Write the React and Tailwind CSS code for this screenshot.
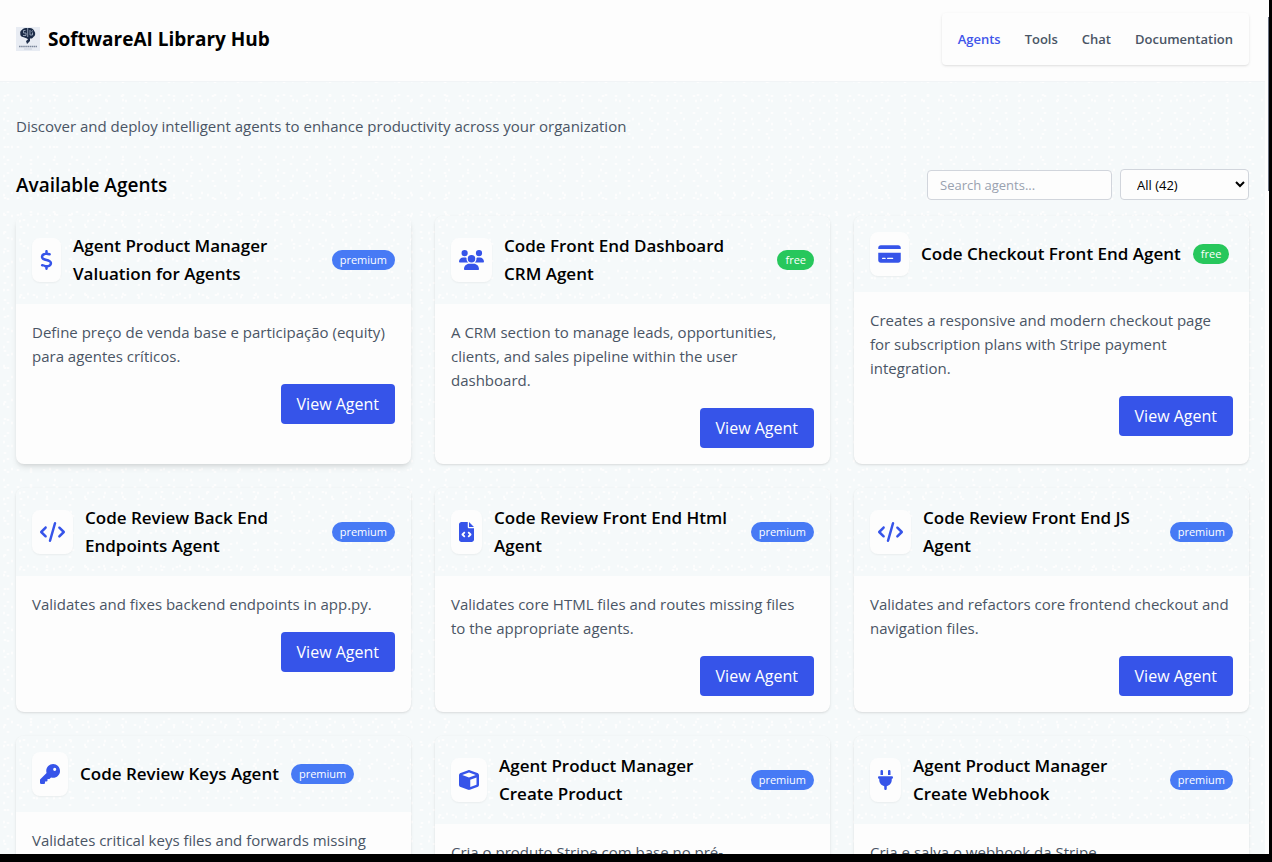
import { FaCode, FaCreditCard, FaCube, FaDollarSign, FaFileCode, FaKey, FaPlug, FaUsers } from "react-icons/fa6";

const agents = [
  { title: "Agent Product Manager Valuation for Agents", tier: "premium", icon: FaDollarSign, iconWidth: "w-[13px]", raised: true, text: "Define preço de venda base e participação (equity) para agentes críticos." },
  { title: "Code Front End Dashboard CRM\u00a0Agent", tier: "free", icon: FaUsers, iconWidth: "w-[25px]", text: "A CRM section to manage leads, opportunities, clients, and sales pipeline within the user dashboard." },
  { title: "Code Checkout Front End Agent", tier: "free", icon: FaCreditCard, iconWidth: "w-[23px]", text: "Creates a responsive and modern checkout page for subscription plans with Stripe payment integration." },
  { title: "Code Review Back End Endpoints Agent", tier: "premium", icon: FaCode, iconWidth: "w-[25px]", text: "Validates and fixes backend endpoints in app.py." },
  { title: "Code Review Front End Html Agent", tier: "premium", icon: FaFileCode, iconWidth: "w-[15px]", text: "Validates core HTML files and routes missing files to\u00a0the appropriate agents." },
  { title: "Code Review Front End JS Agent", tier: "premium", icon: FaCode, iconWidth: "w-[25px]", text: "Validates and refactors core frontend checkout and navigation files." },
  { title: "Code Review Keys Agent", tier: "premium", icon: FaKey, iconWidth: "w-5", text: "Validates critical keys files and forwards missing" },
  { title: "Agent Product Manager Create Product", tier: "premium", icon: FaCube, iconWidth: "w-5", text: "Cria o produto Stripe com base no pré-" },
  { title: "Agent Product Manager Create Webhook", tier: "premium", icon: FaPlug, iconWidth: "w-[15px]", text: "Cria e salva o webhook da Stripe" },
];

const links = ["Agents", "Tools", "Chat", "Documentation"];

// Fine speckle: small light flecks repeated on tiles of different sizes.
const speckle =
  "bg-[#f5f9fa] bg-[radial-gradient(ellipse_1px_2px_at_4px_5px,#fdfdfd_70%,transparent),radial-gradient(ellipse_2px_1px_at_8px_4px,#fdfdfd_70%,transparent),radial-gradient(ellipse_1px_2px_at_12px_9px,#fdfdfd_70%,transparent),radial-gradient(ellipse_2px_1px_at_5px_11px,#fdfdfd_70%,transparent)] bg-size-[17px_19px,23px_13px,19px_23px,13px_17px]";

function Logo() {
  return (
    <svg viewBox="0 0 24 24" className="size-6 shrink-0" aria-hidden="true">
      <rect width="24" height="24" fill="#e8ecf3" />
      <path d="M10 1C7.500 1 6.500 2 6 3 4.500 3.500 4 5 4.300 6.500 4 8.500 5.500 10 7 10l4 1.500 1 1-2 1.500 1 3 3-3v-2.500c2 .3 3-.5 3.300-1.500C19.500 9 19.700 6 18.500 4.500 18 2.500 15.500.5 13 1z" fill="#1c2c48" />
      <path d="M11.700 1v9M9.500 3.500h-2v2.500h2.500v2.500H7M14 3v5h2.500V5.500M17 3.500l-1.500 1" fill="none" stroke="#aab6c9" strokeWidth=".8" />
      <path d="M3 19.500h18" stroke="#7d899c" strokeWidth="1.600" strokeDasharray="1.600 .5" />
      <path d="M8 22h8" stroke="#c3cad6" strokeWidth=".8" />
    </svg>
  );
}

function AgentCard({ agent }) {
  const Icon = agent.icon;
  return (
    <article className={`flex flex-col overflow-hidden rounded-lg bg-[#fdfdfd] ${agent.raised ? "shadow-md" : "shadow-sm"}`}>
      <header className={`flex items-center gap-3 p-4 ${speckle}`}>
        <span className="flex h-11 shrink-0 items-center rounded-lg bg-[#fdfdfd] px-2 text-[#3654e9] shadow-xs">
          <Icon className={`h-5 ${agent.iconWidth}`} />
        </span>
        <h3 className="text-[17px] leading-7 font-semibold">{agent.title}</h3>
        <span className={`shrink-0 rounded-full px-2 py-0.5 text-[11px] leading-4 text-white ${agent.tier === "free" ? "bg-[#27c75c]" : "bg-[#477af5]"}`}>{agent.tier}</span>
      </header>
      <div className="flex flex-col items-end gap-4 p-4">
        <p className="w-full text-[15px] leading-6 text-gray-600">{agent.text}</p>
        <button type="button" className="h-10 rounded bg-[#3654e9] px-4 text-base text-white">View Agent</button>
      </div>
    </article>
  );
}

export default function App() {
  return (
    <div className="flex h-screen bg-black pr-[3px] pb-2 font-['Open_Sans','Noto_Sans',sans-serif] text-black">
      <div className="flex min-w-0 flex-1 overflow-hidden bg-[#fdfdfd]">
        <div className={`min-w-0 flex-1 overflow-y-auto [scrollbar-width:none] ${speckle}`}>
          <header className="flex items-center justify-between border-b border-[#f1f4f6] bg-[#fdfdfd] px-4 pt-[13px] pb-4">
            <div className="flex items-center gap-2">
              <Logo />
              <h1 className="text-[19px] leading-7 font-bold">SoftwareAI Library Hub</h1>
            </div>
            <nav className="flex gap-6 rounded bg-[#fdfdfd] p-4 text-[13px] leading-5 font-semibold text-gray-600 shadow-sm">
              {links.map((link) => (
                <a key={link} href="#" className={link === "Agents" ? "text-[#3f55ea]" : ""}>{link}</a>
              ))}
            </nav>
          </header>
          <main className="px-4 pt-8">
            <p className="text-[15px] leading-6 text-gray-600">Discover and deploy intelligent agents to enhance productivity across your organization</p>
            <div className="mt-[31px] mb-4 flex items-center justify-between">
              <h2 className="text-[19px] leading-7 font-semibold">Available Agents</h2>
              <div className="flex items-end gap-2 text-[13px]">
                <input type="search" aria-label="Search agents" placeholder="Search agents..." className="h-[30px] w-[185px] rounded border border-gray-300 bg-[#fdfdfd] px-3 placeholder:text-gray-400" />
                <select aria-label="Filter agents" className="h-[31px] w-[129px] rounded border border-gray-300 bg-[#fdfdfd] pl-3">
                  <option>All (42)</option>
                </select>
              </div>
            </div>
            <div className="grid grid-cols-3 gap-6">
              {agents.map((agent) => (
                <AgentCard key={agent.title} agent={agent} />
              ))}
            </div>
          </main>
        </div>
        <div className="w-1 shrink-0 pt-[17px] pl-[3px]">
          <div className="h-[174px] bg-gray-500" />
        </div>
      </div>
    </div>
  );
}
